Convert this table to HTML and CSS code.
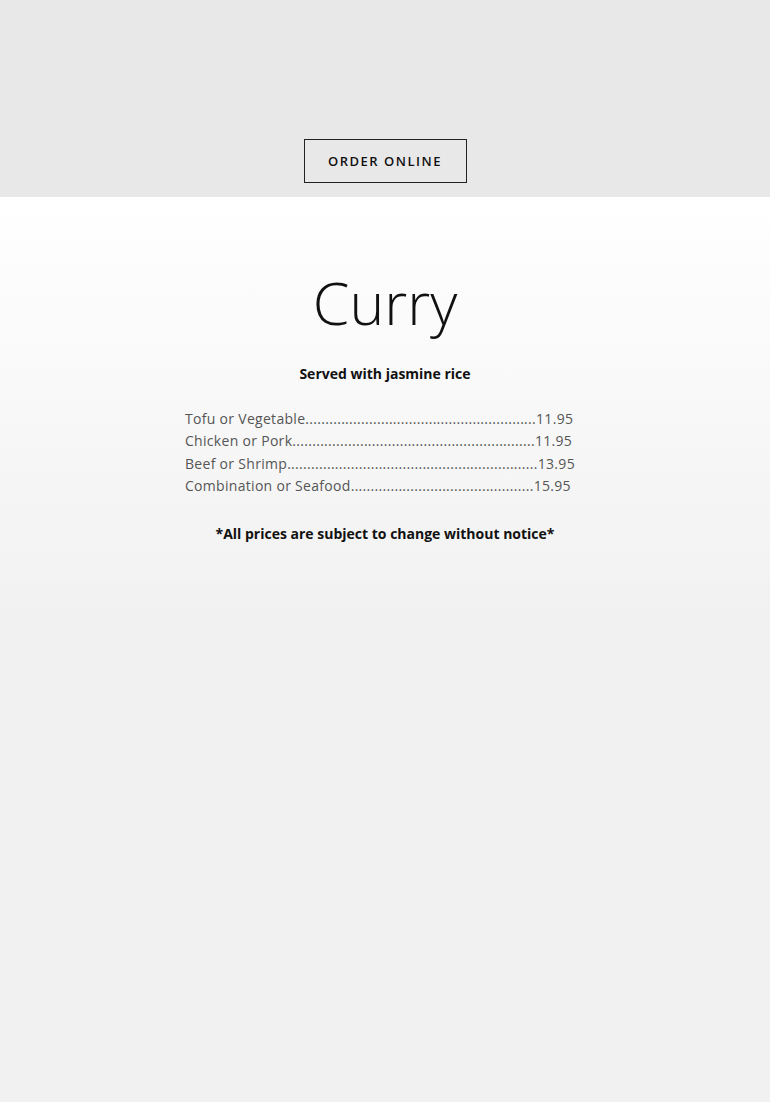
FILE: index.html
```html
<!DOCTYPE html>
<html lang="en">

<head>
    <meta charset="UTF-8">
    <meta name="viewport" content="width=device-width, initial-scale=1.0">
    <title>Curry</title>
    <link rel="stylesheet" href="styles.css">
</head>

<body>

    <div class="topBar">
        <a class="orderBtn" href="#">ORDER ONLINE</a>
    </div>

    <div class="menu">
        <h1 class="title">Curry</h1>
        <p class="subtitle">Served with jasmine rice</p>

        <div class="items">
            <p>Tofu or Vegetable..........................................................11.95</p>
            <p>Chicken or Pork.............................................................11.95</p>
            <p>Beef or Shrimp...............................................................13.95</p>
            <p>Combination or Seafood..............................................15.95</p>
        </div>

        <p class="notice">*All prices are subject to change without notice*</p>
    </div>

</body>

</html>
```

FILE: styles.css
```css
body {
    font-family: "Open Sans", sans-serif;
    margin: 0;
    background: #f1f1f1;
}

.topBar {
    height: 197px;
    background-color: #e9e8e9;
    display: flex;
    justify-content: center;
    align-items: flex-end;
    padding-bottom: 14px;
    box-sizing: border-box;
}

.orderBtn {
    display: block;
    width: 163px;
    height: 44px;
    box-sizing: border-box;
    border: 1px solid #222;
    color: #111;
    text-decoration: none;
    font-size: 13px;
    font-weight: 600;
    letter-spacing: 1.5px;
    line-height: 42px;
    text-align: center;
}

.menu {
    background: linear-gradient(#ffffff, #f1f1f1 420px);
    height: 905px;
    text-align: center;
    padding-top: 65px;
    box-sizing: border-box;
}

.title {
    font-weight: 300;
    font-size: 59px;
    line-height: 80px;
    margin: 0;
    color: #111;
}

.subtitle {
    font-size: 14px;
    font-weight: 700;
    margin: 21.5px 0 0;
    color: #111;
}

.items {
    width: 400px;
    margin: 25.5px auto 0;
    text-align: left;
    color: #555;
    font-size: 14px;
    letter-spacing: 0.3px;
    line-height: 22.3px;
}

.items p {
    margin: 0;
}

.notice {
    font-size: 14px;
    font-weight: 700;
    margin: 26.5px 0 0;
    color: #111;
}
```
